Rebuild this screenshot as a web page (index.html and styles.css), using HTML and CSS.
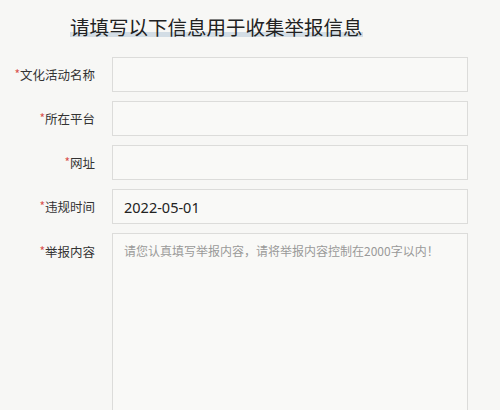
FILE: index.html
```html
<!DOCTYPE html>
<html>
<head>
  <meta charset="UTF-8">
  <meta name="viewport" content="width=device-width, initial-scale=1.0" />
  <title>举报信息</title>
  <link rel="stylesheet" href="styles.css">
</head>

<body>
  <h1 class="title"><span>请填写以下信息用于收集举报信息</span></h1>
  <form class="report">
    <label class="label"><i>*</i>文化活动名称</label>
    <input class="field" type="text" />

    <label class="label"><i>*</i>所在平台</label>
    <input class="field" type="text" />

    <label class="label"><i>*</i>网址</label>
    <input class="field" type="text" />

    <label class="label"><i>*</i>违规时间</label>
    <input class="field date" type="text" value="2022-05-01" />

    <label class="label top"><i>*</i>举报内容</label>
    <textarea class="field content" placeholder="请您认真填写举报内容，请将举报内容控制在2000字以内！"></textarea>
  </form>
</body>

</html>
```

FILE: styles.css
```css
* {
  box-sizing: border-box;
  padding: 0;
  margin: 0;
}

html, body {
  background: #f7f7f5;
  overflow: hidden;
}

body {
  font-family: "Noto Sans CJK SC", "Noto Sans", sans-serif;
  color: #333;
}

.title {
  margin: 12px 0 15px 70px;
  font-size: 19.5px;
  font-weight: normal;
  line-height: 30px;
  color: #222;
}

.title span {
  background: linear-gradient(to bottom, transparent 68%, #d3dde5 68%, #d3dde5 86%, transparent 86%);
}

.report {
  display: grid;
  grid-template-columns: 112px 356px;
  row-gap: 9px;
  align-items: center;
}

.label {
  padding-right: 17px;
  text-align: right;
  font-size: 12.5px;
  color: #333;
}

.label i {
  font-style: normal;
  color: #d9534f;
  font-size: 12px;
  vertical-align: 1px;
}

.label.top {
  align-self: start;
  padding-top: 9px;
}

.field {
  display: block;
  width: 100%;
  height: 35px;
  padding: 0 11px;
  border: 1px solid #dcdcda;
  background: #f9f9f7;
  font-family: "Noto Sans", "Noto Sans CJK SC", sans-serif;
  font-size: 14.5px;
  color: #222;
  outline: none;
}

.field.content {
  height: 178px;
  padding: 8px 11px;
  border-bottom: 0;
  resize: none;
  font-family: "Noto Sans CJK SC", sans-serif;
  font-size: 12px;
}

.field.content::placeholder {
  color: #999;
}
```
